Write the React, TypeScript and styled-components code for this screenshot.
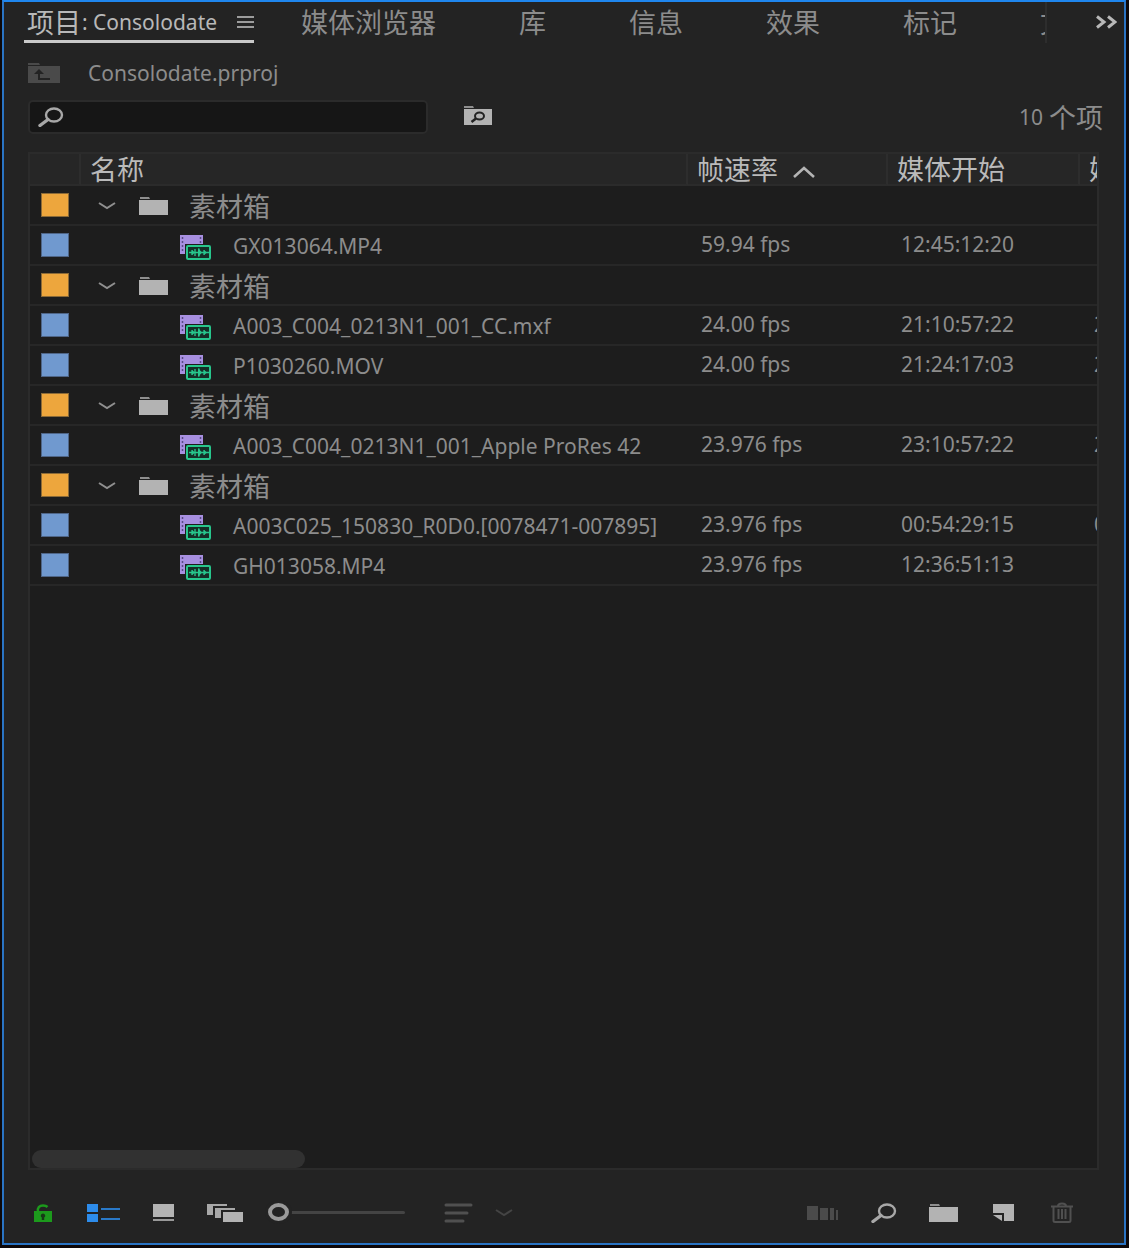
import React from "react";
import styled, { createGlobalStyle } from "styled-components";

const latin = `"Noto Sans", "Open Sans", "Noto Sans CJK SC", sans-serif`;
const cjk = `"Noto Sans CJK SC", "Noto Sans", sans-serif`;

const GlobalStyle = createGlobalStyle`
  *, *::before, *::after { box-sizing: border-box; }
  body { margin: 0; background: #0d0809; }
  button, input { font: inherit; color: inherit; }
`;

const Frame = styled.main`
  display: flex;
  flex-direction: column;
  height: calc(100vh - 3px);
  min-height: 760px;
  margin: 0 3px 3px 2px;
  border: 2px solid #2a74c4;
  border-top-color: #1f86ee;
  background: #232323;
  color: #8c8c8c;
  font-family: ${latin};
  font-size: 21px;
  line-height: 28px;
  overflow: hidden;
`;

const Han = styled.span`
  font-family: ${cjk};
  font-size: 27px;
  line-height: 28px;
`;

const IconButton = styled.button`
  display: inline-flex;
  align-items: center;
  flex: none;
  padding: 0;
  border: 0;
  background: none;
  cursor: pointer;
  svg { display: block; }
`;

const TabBar = styled.nav`
  display: flex;
  align-items: stretch;
  height: 41px;
  padding-left: 20px;
`;

const TabStrip = styled.div`
  display: flex;
  flex: 1;
  min-width: 0;
  gap: 83px;
  overflow: hidden;
  border-right: 2px solid #2d2d2d;
`;

const Tab = styled.button<{ $active?: boolean }>`
  display: flex;
  align-items: center;
  flex: none;
  padding: 2px 0 ${(p) => (p.$active ? 0 : 3)}px;
  margin-right: ${(p) => (p.$active ? -36 : 0)}px;
  border: 0;
  border-bottom: ${(p) => (p.$active ? "3px solid #cacaca" : "0")};
  background: none;
  color: ${(p) => (p.$active ? "#b8b8b8" : "#8c8c8c")};
  white-space: nowrap;
  cursor: pointer;
`;

const TabTitle = styled.span`
  display: flex;
  align-items: center;
  gap: 1px;
  padding: 0 20px 0 3px;
`;

const Overflow = styled(IconButton)`
  justify-content: flex-end;
  width: 77px;
  padding: 0 7px 2px 0;
`;

const Breadcrumb = styled.div`
  display: flex;
  align-items: center;
  gap: 28px;
  height: 57px;
  padding: 2px 24px 0;
`;

const SearchRow = styled.div`
  display: flex;
  align-items: center;
  gap: 36px;
  padding: 0 21px 0 24px;
`;

const SearchBox = styled.label`
  display: flex;
  align-items: center;
  gap: 10px;
  flex: 0 1 400px;
  height: 34px;
  padding: 0 8px;
  border: 2px solid #2b2b2b;
  border-radius: 5px;
  background: #161616;
  svg { flex: none; }
`;

const SearchInput = styled.input`
  flex: 1;
  min-width: 0;
  height: 28px;
  padding: 0;
  border: 0;
  outline: 0;
  background: transparent;
`;

const ItemCount = styled.span`
  display: flex;
  align-items: center;
  gap: 6px;
  margin-left: auto;
  white-space: nowrap;
`;

const Panel = styled.section`
  display: flex;
  flex-direction: column;
  flex: 1;
  min-height: 0;
  margin: 18px 25px 0 24px;
  border: 2px solid #2b2b2b;
  background: #1d1d1d;
  overflow: hidden;
`;

const Table = styled.table`
  width: 100%;
  table-layout: fixed;
  border-collapse: separate;
  border-spacing: 0;
`;

const Col = styled.col<{ $w?: number }>`
  width: ${(p) => (p.$w ? `${p.$w}px` : "auto")};
`;

const HeadCell = styled.th`
  height: 32px;
  padding: 0 0 0 9px;
  border-bottom: 2px solid #2b2b2b;
  border-right: 2px solid #2d2d2d;
  background: #262626;
  color: #bababa;
  font-weight: 400;
  text-align: left;
  white-space: nowrap;
  &:last-child {
    border-right: 0;
    overflow: hidden;
  }
`;

const HeadLabel = styled.div`
  display: flex;
  align-items: center;
  gap: 14px;
  height: 28px;
`;

const Cell = styled.td`
  height: 40px;
  padding: 0 0 2px 13px;
  border-bottom: 2px solid #272727;
  white-space: nowrap;
  &:last-child {
    padding-left: 14px;
    overflow: hidden;
  }
`;

const LabelCell = styled(Cell)`
  padding: 0 0 0 11px;
`;

const Swatch = styled.div<{ $bin: boolean }>`
  width: 28px;
  height: 24px;
  border: 1px solid ${(p) => (p.$bin ? "#8b6a37" : "#4f6688")};
  background: ${(p) => (p.$bin ? "#eda63d" : "#7099cf")};
`;

const NameCell = styled(Cell)`
  padding: 2px 0 0;
`;

const BinName = styled.div`
  display: flex;
  align-items: center;
  gap: 23px;
  padding-left: 17px;
`;

const BinTitle = styled(Han)`
  margin-left: -2px;
`;

const ClipName = styled.div`
  display: flex;
  align-items: center;
  gap: 21px;
  padding-left: 98px;
`;

const ScrollThumb = styled.div`
  width: 273px;
  height: 18px;
  margin: auto 0 0 2px;
  border-radius: 9px;
  background: #313131;
`;

const Footer = styled.footer`
  display: flex;
  align-items: center;
  height: 73px;
  padding: 12px 50px 0 30px;
`;

const Tools = styled.div<{ $end?: boolean }>`
  display: flex;
  align-items: center;
  gap: 32px;
  margin-left: ${(p) => (p.$end ? "auto" : "0")};
`;

const SortTools = styled(Tools)`
  gap: 22px;
`;

const ZoomSlider = styled.input`
  flex: 0 1 137px;
  min-width: 60px;
  height: 20px;
  margin: 0 39px 0 24px;
  appearance: none;
  background: none;
  &::-webkit-slider-runnable-track {
    height: 3px;
    border-radius: 2px;
    background: #444444;
  }
  &::-webkit-slider-thumb {
    appearance: none;
    width: 21px;
    height: 18px;
    margin-top: -8px;
    border: 4px solid #9a9a9a;
    border-radius: 50%;
    background: #232323;
    box-shadow: 0 0 0 3px #232323;
  }
`;

const Folder = () => (
  <svg width="29" height="18" viewBox="0 0 29 18">
    <path d="M1 0H10L11 2H1Z" fill="#8f8f8f" />
    <path d="M0 3H29V18H0Z" fill="#b3b3b3" />
  </svg>
);

const UpFolder = () => (
  <svg width="32" height="20" viewBox="0 0 32 20">
    <path d="M0 0H11L12 2H0ZM0 3H32V20H0Z" fill="#4a4a4a" />
    <path d="M11 8V16H22" fill="none" stroke="#232323" strokeWidth="2" />
    <path d="M6 11L11 6L16 11Z" fill="#232323" />
  </svg>
);

const Magnifier = ({ color = "#a8a8a8" }: { color?: string }) => (
  <svg width="26" height="20" viewBox="0 0 26 20" fill="none" stroke={color}>
    <ellipse cx="16" cy="8" rx="8" ry="6.5" strokeWidth="2.4" />
    <path d="M10 12.5L2 18.5" strokeWidth="3.4" strokeLinecap="round" />
  </svg>
);

const SearchFolder = () => (
  <svg width="28" height="22" viewBox="0 0 28 22">
    <path d="M0 0H9L10 2H0Z" fill="#8f8f8f" />
    <path d="M0 3H28V19H0Z" fill="#b3b3b3" />
    <ellipse cx="15.500" cy="10" rx="4.500" ry="3.500" fill="none" stroke="#232323" strokeWidth="2" />
    <path d="M12 12.500L7.500 16" stroke="#232323" strokeWidth="2.500" />
  </svg>
);

const Chevron = ({ color = "#8f8f8f" }: { color?: string }) => (
  <svg width="18" height="10" viewBox="0 0 18 10" fill="none" stroke={color} strokeWidth="2">
    <path d="M1 2L9 7L17 2" />
  </svg>
);

const SortArrow = () => (
  <svg width="24" height="20" viewBox="0 0 24 20" fill="none" stroke="#b4b4b4" strokeWidth="2.600">
    <path d="M2 18L12 9L22 18" />
  </svg>
);

const Clip = () => (
  <svg width="33" height="32" viewBox="0 -4 33 32">
    <path d="M1 1H24V20H1Z" fill="#a78fe0" />
    <path d="M7 11H19V20H7Z" fill="#1d1d1d" />
    <path d="M3.500 3V19M21.500 3V10" stroke="#5a4b86" strokeWidth="1.500" strokeDasharray="2 2" />
    <path d="M6 10H33V28H6Z" fill="#1d1d1d" />
    <rect x="8" y="12" width="23" height="13" rx="1" fill="#153027" stroke="#27c68c" strokeWidth="2" />
    <path d="M10 18.500H30M13 16V21M16 15V22M20 14.500V22.500M25 16V21" stroke="#27c68c" strokeWidth="1.300" />
    <path d="M19 14L23 18.500L19 23ZM25 16L28 18.500L25 21ZM13 16L16 18.500L13 21Z" fill="#27c68c" />
  </svg>
);

const Menu = () => (
  <svg width="17" height="14" viewBox="0 0 17 14" stroke="#9c9c9c" strokeWidth="2">
    <path d="M0 2H17M0 7H17M0 12H17" />
  </svg>
);

const DoubleArrow = () => (
  <svg width="21" height="14" viewBox="0 0 21 14" fill="none" stroke="#b8b8b8" strokeWidth="3">
    <path d="M1 1.500L8 7L1 12.500M12 1.500L19 7L12 12.500" />
  </svg>
);

const Lock = () => (
  <svg width="20" height="18" viewBox="0 0 20 18">
    <path d="M4 8C3 3.500 5.500 1.500 9 1.500C11 1.500 12.500 2 13.500 3" fill="none" stroke="#1c9a1c" strokeWidth="2.500" />
    <path d="M0 7H18V18H0Z" fill="#1c9a1c" />
    <path d="M9 9.500a2.500 2.200 0 0 1 1.200 4V16H7.800V13.500A2.500 2.200 0 0 1 9 9.500Z" fill="#173a17" />
  </svg>
);

const ListView = () => (
  <svg width="34" height="18" viewBox="0 0 34 18">
    <path d="M1 0H12V8H1ZM1 10H12V18H1Z" fill="#2d8ceb" />
    <path d="M15 5H34M15 15H34" stroke="#2a79c8" strokeWidth="2" />
  </svg>
);

const IconView = () => (
  <svg width="22" height="18" viewBox="0 0 22 18">
    <path d="M1 0H22V13H1Z" fill="#b3b3b3" />
    <path d="M1 15H22V17H1Z" fill="#999999" />
  </svg>
);

const FreeView = () => (
  <svg width="38" height="18" viewBox="0 0 38 18">
    <path d="M1 0H21V2H7V11H1Z" fill="#a8a8a8" />
    <path d="M9 4H29V6H15V14H9Z" fill="#a8a8a8" />
    <path d="M17 8H37V18H17Z" fill="#b3b3b3" />
  </svg>
);

const SortLines = () => (
  <svg width="29" height="20" viewBox="0 0 29 20" stroke="#505050" strokeWidth="3" strokeLinecap="round">
    <path d="M2 2H27M2 10H23M2 18H19" />
  </svg>
);

const Automate = () => (
  <svg width="32" height="14" viewBox="0 0 32 14" fill="#4b4b4b">
    <path d="M0 0H11V14H0ZM13 2H21V14H13ZM23 2H27V14H23ZM29 4H31V14H29Z" />
  </svg>
);

const NewItem = () => (
  <svg width="28" height="20" viewBox="0 0 28 20">
    <path d="M3 1H24V18H14V10H3Z" fill="#b3b3b3" />
    <path d="M3 12H12V18Z" fill="#b3b3b3" />
  </svg>
);

const Trash = () => (
  <svg width="24" height="22" viewBox="0 0 24 22" fill="none" stroke="#505050" strokeWidth="2">
    <path d="M1 4.500H23M8 4C8 0.500 16 0.500 16 4M3.500 5V18.500Q3.500 20 5 20H19Q20.500 20 20.500 18.500V5M8.500 7V17M12 7V17M15.500 7V17" />
  </svg>
);

type Row = { name: string; fps?: string; start?: string; end?: string };

const rows: Row[] = [
  { name: "素材箱" },
  { name: "GX013064.MP4", fps: "59.94 fps", start: "12:45:12:20" },
  { name: "素材箱" },
  { name: "A003_C004_0213N1_001_CC.mxf", fps: "24.00 fps", start: "21:10:57:22", end: "2" },
  { name: "P1030260.MOV", fps: "24.00 fps", start: "21:24:17:03", end: "2" },
  { name: "素材箱" },
  { name: "A003_C004_0213N1_001_Apple ProRes 42", fps: "23.976 fps", start: "23:10:57:22", end: "2" },
  { name: "素材箱" },
  { name: "A003C025_150830_R0D0.[0078471-007895]", fps: "23.976 fps", start: "00:54:29:15", end: "0" },
  { name: "GH013058.MP4", fps: "23.976 fps", start: "12:36:51:13" },
];

const tabs = ["媒体浏览器", "库", "信息", "效果", "标记", "文本"];

export default function App() {
  return (
    <>
      <GlobalStyle />
      <Frame>
        <TabBar>
          <TabStrip>
            <Tab $active>
              <TabTitle>
                <Han>项目</Han>
                <span>: Consolodate</span>
              </TabTitle>
              <Menu />
            </Tab>
            {tabs.map((t) => (
              <Tab key={t}>
                <Han>{t}</Han>
              </Tab>
            ))}
          </TabStrip>
          <Overflow aria-label="更多面板">
            <DoubleArrow />
          </Overflow>
        </TabBar>

        <Breadcrumb>
          <IconButton aria-label="上一级" disabled>
            <UpFolder />
          </IconButton>
          <span>Consolodate.prproj</span>
        </Breadcrumb>

        <SearchRow>
          <SearchBox>
            <Magnifier />
            <SearchInput type="text" aria-label="搜索" />
          </SearchBox>
          <IconButton aria-label="新建搜索素材箱">
            <SearchFolder />
          </IconButton>
          <ItemCount>
            <span>10</span>
            <Han>个项</Han>
          </ItemCount>
        </SearchRow>

        <Panel>
          <Table>
            <colgroup>
              <Col $w={51} />
              <Col />
              <Col $w={200} />
              <Col $w={192} />
              <Col $w={17} />
            </colgroup>
            <thead>
              <tr>
                <HeadCell />
                <HeadCell>
                  <HeadLabel>
                    <Han>名称</Han>
                  </HeadLabel>
                </HeadCell>
                <HeadCell>
                  <HeadLabel>
                    <Han>帧速率</Han>
                    <SortArrow />
                  </HeadLabel>
                </HeadCell>
                <HeadCell>
                  <HeadLabel>
                    <Han>媒体开始</Han>
                  </HeadLabel>
                </HeadCell>
                <HeadCell>
                  <HeadLabel>
                    <Han>媒</Han>
                  </HeadLabel>
                </HeadCell>
              </tr>
            </thead>
            <tbody>
              {rows.map((r, i) => (
                <tr key={i}>
                  <LabelCell>
                    <Swatch $bin={!r.fps} />
                  </LabelCell>
                  <NameCell>
                    {r.fps ? (
                      <ClipName>
                        <Clip />
                        <span>{r.name}</span>
                      </ClipName>
                    ) : (
                      <BinName>
                        <IconButton aria-label="折叠">
                          <Chevron />
                        </IconButton>
                        <Folder />
                        <BinTitle>{r.name}</BinTitle>
                      </BinName>
                    )}
                  </NameCell>
                  <Cell>{r.fps}</Cell>
                  <Cell>{r.start}</Cell>
                  <Cell>{r.end}</Cell>
                </tr>
              ))}
            </tbody>
          </Table>
          <ScrollThumb />
        </Panel>

        <Footer>
          <Tools>
            <IconButton aria-label="项目可写">
              <Lock />
            </IconButton>
            <IconButton aria-label="列表视图">
              <ListView />
            </IconButton>
            <IconButton aria-label="图标视图">
              <IconView />
            </IconButton>
            <IconButton aria-label="自由变换视图">
              <FreeView />
            </IconButton>
          </Tools>
          <ZoomSlider type="range" min={0} max={100} defaultValue={0} aria-label="缩放" />
          <SortTools>
            <IconButton aria-label="排序图标" disabled>
              <SortLines />
            </IconButton>
            <IconButton aria-label="排序选项" disabled>
              <Chevron color="#444444" />
            </IconButton>
          </SortTools>
          <Tools $end>
            <IconButton aria-label="自动匹配序列" disabled>
              <Automate />
            </IconButton>
            <IconButton aria-label="查找">
              <Magnifier />
            </IconButton>
            <IconButton aria-label="新建素材箱">
              <Folder />
            </IconButton>
            <IconButton aria-label="新建项">
              <NewItem />
            </IconButton>
            <IconButton aria-label="清除" disabled>
              <Trash />
            </IconButton>
          </Tools>
        </Footer>
      </Frame>
    </>
  );
}
